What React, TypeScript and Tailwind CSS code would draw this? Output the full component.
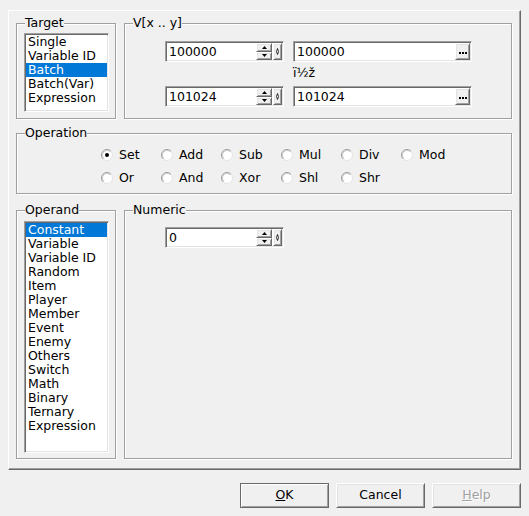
import clsx from 'clsx';
import type { ReactNode } from 'react';

// classic 3D edges
const SUNKEN =
  'border border-t-[#a0a0a0] border-l-[#a0a0a0] border-r-white border-b-white shadow-[inset_1px_1px_0_#696969,inset_-1px_-1px_0_#e3e3e3]';
const RAISED =
  'border border-t-white border-l-white border-r-[#696969] border-b-[#696969] shadow-[inset_1px_1px_0_#e3e3e3,inset_-1px_-1px_0_#a0a0a0]';

const TARGETS = ['Single', 'Variable ID', 'Batch', 'Batch(Var)', 'Expression'];
const OPERANDS = [
  'Constant', 'Variable', 'Variable ID', 'Random', 'Item', 'Player', 'Member',
  'Event', 'Enemy', 'Others', 'Switch', 'Math', 'Binary', 'Ternary', 'Expression',
];
const OPS = [
  ['Set', 'Add', 'Sub', 'Mul', 'Div', 'Mod'],
  ['Or', 'And', 'Xor', 'Shl', 'Shr'],
];

const Group = ({ title, className, children }: { title: string; className?: string; children?: ReactNode }) => (
  <fieldset className={clsx('border border-[#a0a0a0] shadow-[1px_1px_0_#fff,inset_1px_1px_0_#fff]', className)}>
    <legend className="ml-[8px] px-0 leading-[14px] bg-[#f0f0f0]">{title}</legend>
    {children}
  </fieldset>
);

const ListBox = ({ items, selected, className }: { items: string[]; selected: string; className?: string }) => (
  <div className={clsx('bg-white p-px w-[85px] ml-[7px]', SUNKEN, className)}>
    {items.map(it => (
      <div
        key={it}
        className={clsx('h-[14px] leading-[14px] pl-[2px] whitespace-nowrap', it === selected && 'bg-[#0078d7] text-white')}
      >
        {it}
      </div>
    ))}
  </div>
);

const Arrow = ({ up }: { up?: boolean }) => (
  <svg width="5" height="3" viewBox="0 0 5 3">
    <path d={up ? 'M2.5 0 L5 3 L0 3 Z' : 'M0 0 L5 0 L2.5 3 Z'} fill="#000" />
  </svg>
);

const SpinEdit = ({ value }: { value: string }) => (
  <div className={clsx('flex w-[119px] h-[21px] bg-white p-px', SUNKEN)}>
    <span className="flex-1 pl-[2px] leading-[17px]">{value}</span>
    <div className="flex flex-col w-[16px]">
      <div className={clsx('flex-1 flex items-center justify-center bg-[#f0f0f0]', RAISED)}>
        <Arrow up />
      </div>
      <div className={clsx('flex-1 flex items-center justify-center bg-[#f0f0f0]', RAISED)}>
        <Arrow />
      </div>
    </div>
    <div className={clsx('w-[9px] ml-px flex items-center justify-center bg-[#f0f0f0]', RAISED)}>
      <svg width="3" height="7" viewBox="0 0 3 7">
        <path d="M1.5 0.5 L2.5 3.5 L1.5 6.5 L0.5 3.5 Z" fill="none" stroke="#000" strokeWidth="0.8" />
      </svg>
    </div>
  </div>
);

const BrowseEdit = ({ value }: { value: string }) => (
  <div className={clsx('flex w-[179px] h-[21px] bg-white p-px', SUNKEN)}>
    <span className="flex-1 pl-[2px] leading-[17px]">{value}</span>
    <div className={clsx('w-[15px] flex items-end justify-center gap-px pb-[5px] bg-[#f0f0f0]', RAISED)}>
      <span className="w-[2px] h-[2px] bg-black" />
      <span className="w-[2px] h-[2px] bg-black" />
      <span className="w-[2px] h-[2px] bg-black" />
    </div>
  </div>
);

const Radio = ({ label, checked }: { label: string; checked?: boolean }) => (
  <div className="w-[60px] h-[14px] flex items-center">
    <svg width="12" height="12" viewBox="0 0 12 12" className="shrink-0">
      <circle cx="6" cy="6" r="5.5" fill="#fff" stroke="#e3e3e3" />
      <path d="M2.1 9.9 A5.5 5.5 0 0 1 9.9 2.1" fill="none" stroke="#a0a0a0" />
      <path d="M2.8 9.2 A4.5 4.5 0 0 1 9.2 2.8" fill="none" stroke="#c8c8c8" />
      {checked && <circle cx="6" cy="6" r="2" fill="#000" />}
    </svg>
    <span className="ml-[6px] leading-[14px]">{label}</span>
  </div>
);

export default function App() {
  return (
    <div className="w-[529px] h-[516px] bg-[#f0f0f0] pt-[10px] text-[12.5px] text-black font-['DejaVu_Sans',sans-serif]">
      <div
        className="ml-[8px] w-[513px] h-[460px] pt-[5px] pl-[7px] border-t border-l border-t-white border-l-white border-r border-b border-r-[#696969] border-b-[#696969] shadow-[inset_-1px_-1px_0_#a0a0a0]"
      >
        {/* Target / range */}
        <div className="flex gap-[8px]">
          <Group title="Target" className="w-[100px] h-[103px]">
            <ListBox items={TARGETS} selected="Batch" className="mt-[3px] h-[79px]" />
          </Group>
          <Group title="V[x .. y]" className="w-[388px] h-[103px]">
            <div className="ml-[40px] mt-[11px]">
              <div className="flex gap-[9px]">
                <SpinEdit value="100000" />
                <BrowseEdit value="100000" />
              </div>
              <div className="ml-[128px] mt-[4px] h-[14px] leading-[14px]">ï½ž</div>
              <div className="flex gap-[9px] mt-[6px]">
                <SpinEdit value="101024" />
                <BrowseEdit value="101024" />
              </div>
            </div>
          </Group>
        </div>

        {/* Operation */}
        <Group title="Operation" className="mt-[7px] w-[496px] h-[68px]">
          <div className="ml-[84px] mt-[8px] flex flex-col gap-[9px]">
            {OPS.map((row, i) => (
              <div key={i} className="flex">
                {row.map(op => (
                  <Radio key={op} label={op} checked={op === 'Set'} />
                ))}
              </div>
            ))}
          </div>
        </Group>

        {/* Operand */}
        <div className="flex gap-[8px] mt-[9px]">
          <Group title="Operand" className="w-[100px] h-[256px]">
            <ListBox items={OPERANDS} selected="Constant" className="mt-[4px] h-[232px]" />
          </Group>
          <Group title="Numeric" className="w-[388px] h-[256px]">
            <div className="ml-[40px] mt-[10px]">
              <SpinEdit value="0" />
            </div>
          </Group>
        </div>
      </div>

      {/* Dialog buttons */}
      <div className="flex justify-end gap-[7px] pr-[8px] mt-[13px]">
        <button className="w-[89px] h-[25px] bg-[#f0f0f0] border border-[#696969] shadow-[inset_1px_1px_0_#fff,inset_-1px_-1px_0_#a0a0a0]">
          <u>O</u>K
        </button>
        <button className={clsx('w-[89px] h-[25px] bg-[#f0f0f0]', RAISED)}>Cancel</button>
        <button className={clsx('w-[89px] h-[25px] bg-[#f0f0f0] text-[#a0a0a0] [text-shadow:1px_1px_0_#fff]', RAISED)} disabled>
          <u>H</u>elp
        </button>
      </div>
    </div>
  );
}
